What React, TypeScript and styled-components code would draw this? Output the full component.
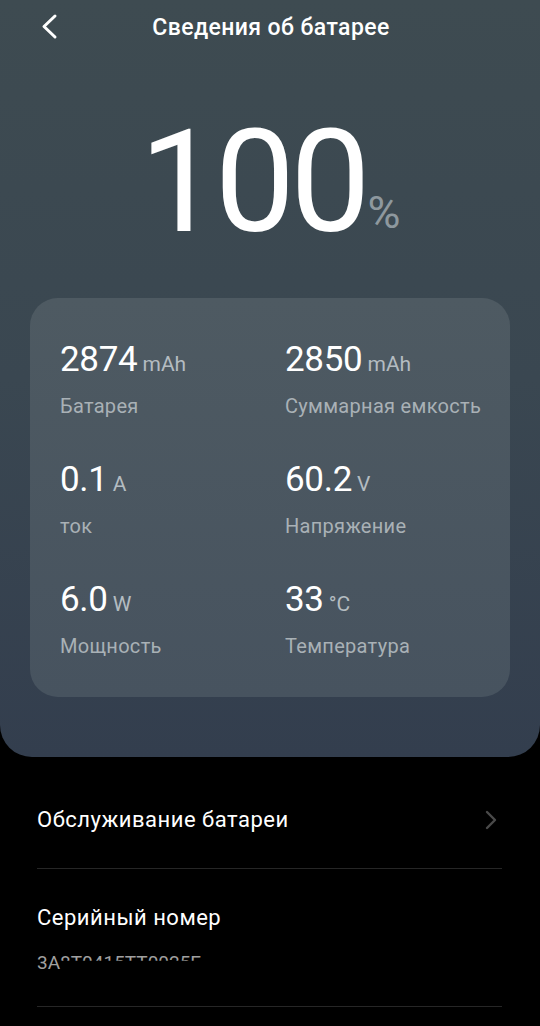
import React from "react"
import styled, { createGlobalStyle } from "styled-components"

const GlobalStyle = createGlobalStyle`
  html, body {
    margin: 0;
    padding: 0;
    background: #000;
  }
  body {
    font-family: Roboto, "Noto Sans", "Liberation Sans", sans-serif;
    -webkit-font-smoothing: antialiased;
  }
`

type Stat = { value: string; unit: string; label: string }

const stats: Stat[] = [
  { value: "2874", unit: "mAh", label: "Батарея" },
  { value: "2850", unit: "mAh", label: "Суммарная емкость" },
  { value: "0.1", unit: "A", label: "ток" },
  { value: "60.2", unit: "V", label: "Напряжение" },
  { value: "6.0", unit: "W", label: "Мощность" },
  { value: "33", unit: "°C", label: "Температура" },
]

const App: React.FC = () => {
  return (
    <Page>
      <GlobalStyle />
      <TopPanel>
        <Header>
          <BackButton aria-label="Назад">
            <svg width="22" height="28" viewBox="0 0 22 28" fill="none">
              <path
                d="M15 3 L4 13.5 L15 24"
                stroke="#fff"
                strokeWidth="3"
                strokeLinecap="round"
                strokeLinejoin="round"
              />
            </svg>
          </BackButton>
          <Title>Сведения об батарее</Title>
        </Header>

        <Hero>
          <Percent>100</Percent>
          <PercentSign>%</PercentSign>
        </Hero>

        <StatsCard>
          {stats.map((s) => (
            <StatItem key={s.label}>
              <ValueLine>
                <Value>{s.value}</Value>
                <Unit>{s.unit}</Unit>
              </ValueLine>
              <StatLabel>{s.label}</StatLabel>
            </StatItem>
          ))}
        </StatsCard>
      </TopPanel>

      <List>
        <ListRow $height={112} $offset={15}>
          <RowTitle>Обслуживание батареи</RowTitle>
          <svg width="14" height="22" viewBox="0 0 14 22" fill="none">
            <path
              d="M3 3 L11 11 L3 19"
              stroke="#4a4a4a"
              strokeWidth="2.4"
              strokeLinecap="round"
              strokeLinejoin="round"
            />
          </svg>
        </ListRow>
        <ListRow $height={138} $offset={3}>
          <RowText>
            <RowTitle>Серийный номер</RowTitle>
            <Serial>
              3A<Masked>8T0415TT0025E</Masked>
            </Serial>
          </RowText>
        </ListRow>
      </List>
    </Page>
  )
}

const Page = styled.div`
  width: 540px;
  min-height: 1026px;
  background: #000;
  overflow: hidden;
`

const TopPanel = styled.div`
  background: linear-gradient(180deg, #3e4b51 0%, #3a4751 50%, #333e4e 100%);
  border-radius: 0 0 32px 32px;
  padding: 0 30px 60px;
  display: flex;
  flex-direction: column;
`

const Header = styled.div`
  height: 54px;
  display: flex;
  align-items: center;
  justify-content: center;
  position: relative;
`

const BackButton = styled.div`
  position: absolute;
  left: 10px;
  top: 13px;
  display: flex;
`

const Title = styled.div`
  color: #fff;
  font-size: 23px;
  font-weight: 500;
  letter-spacing: 0.4px;
  margin-left: 2px;
`

const Hero = styled.div`
  height: 244px;
  display: flex;
  justify-content: center;
  align-items: flex-start;
  box-sizing: border-box;
`

const Percent = styled.div`
  color: #fff;
  font-size: 143px;
  font-weight: 400;
  line-height: 1;
  letter-spacing: -5px;
  margin-top: 57px;
`

const PercentSign = styled.div`
  color: #8e989e;
  font-size: 45px;
  line-height: 1;
  margin-top: 136px;
  margin-left: 2px;
`

const StatsCard = styled.div`
  background: linear-gradient(180deg, #4e5a62 0%, #47535f 100%);
  border-radius: 28px;
  padding: 42px 20px 39px 30px;
  display: grid;
  grid-template-columns: 225px 1fr;
  row-gap: 42px;
`

const StatItem = styled.div`
  display: flex;
  flex-direction: column;
  gap: 14px;
`

const ValueLine = styled.div`
  display: flex;
  align-items: baseline;
  height: 40px;
`

const Value = styled.span`
  color: #fff;
  font-size: 35px;
  line-height: 40px;
  font-weight: 400;
  letter-spacing: -0.3px;
`

const Unit = styled.span`
  color: #b4bcc1;
  font-size: 21px;
  margin-left: 5px;
`

const StatLabel = styled.div`
  color: #a9b1b6;
  font-size: 20px;
  line-height: 24px;
  letter-spacing: 0.3px;
`

const List = styled.div`
  padding: 0 38px 0 37px;
`

const ListRow = styled.div<{ $height: number; $offset: number }>`
  height: ${(p) => p.$height}px;
  box-sizing: border-box;
  padding-top: ${(p) => p.$offset}px;
  display: flex;
  align-items: center;
  justify-content: space-between;
  border-bottom: 1px solid #262626;
  padding-right: 4px;
`

const RowText = styled.div`
  display: flex;
  flex-direction: column;
  gap: 17px;
`

const RowTitle = styled.div`
  color: #fff;
  font-size: 22px;
  line-height: 28px;
  letter-spacing: 0.5px;
`

const Serial = styled.div`
  color: #a0a0a0;
  font-size: 19px;
  line-height: 24px;
  margin-top: 2px;
`

const Masked = styled.span`
  clip-path: inset(0 0 55% 0);
`

export default App
